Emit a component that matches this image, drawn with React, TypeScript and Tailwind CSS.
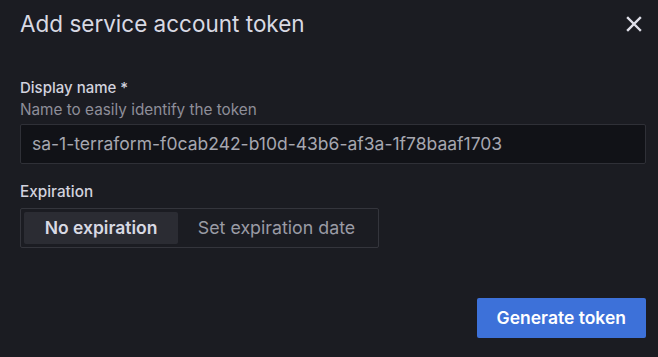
import React from "react";

export default function App() {
  return (
    <div
      className="w-[658px] h-[357px] bg-[#1b1c22] flex flex-col pl-[20px] pr-[12px] text-[#ccccdc]"
      style={{ fontFamily: "Inter, 'Noto Sans', sans-serif" }}
    >
      <div className="flex items-start justify-between pt-[10px]">
        <h1 className="text-[22.5px] leading-[28px] font-normal text-[#d8d9e3]">
          Add service account token
        </h1>
        <button className="mt-[4px] mr-[2px] w-[20px] h-[20px] flex items-center justify-center text-[#e0e0ea]">
          <svg width="16" height="16" viewBox="0 0 16 16" fill="none">
            <path d="M2 2 L14 14 M14 2 L2 14" stroke="currentColor" strokeWidth="2.4" strokeLinecap="square" />
          </svg>
        </button>
      </div>

      <div className="mt-[40px] flex flex-col">
        <label className="text-[15px] leading-[20px] font-medium text-[#d2d2de]">Display name *</label>
        <div className="mt-[2px] text-[15.3px] leading-[20px] text-[#8e8e99]">Name to easily identify the token</div>
        <div className="mt-[4px] h-[40px] bg-[#111217] border border-[#2f3037] rounded-[2px] flex items-center pl-[11px] text-[17.5px] text-[#a6a7b0]">
          sa-1-terraform-f0cab242-b10d-43b6-af3a-1f78baaf1703
        </div>
      </div>

      <div className="mt-[18px] flex flex-col">
        <label className="text-[15.3px] leading-[20px] font-medium text-[#d2d2de]">Expiration</label>
        <div className="mt-[6px] self-start h-[40px] border border-[#34353c] rounded-[2px] p-[3px] flex items-stretch">
          <div className="w-[154px] bg-[#2b2c33] rounded-[2px] flex items-center justify-center text-[17.5px] font-semibold text-[#d8d9e3]">
            No expiration
          </div>
          <div className="w-[197px] flex items-center justify-center text-[17.8px] text-[#9a9ba5]">
            Set expiration date
          </div>
        </div>
      </div>

      <div className="mt-[50px] flex justify-end">
        <button className="h-[40px] px-[20px] bg-[#3d71d9] rounded-[2px] text-[17.5px] font-semibold text-white">
          Generate token
        </button>
      </div>
    </div>
  );
}
